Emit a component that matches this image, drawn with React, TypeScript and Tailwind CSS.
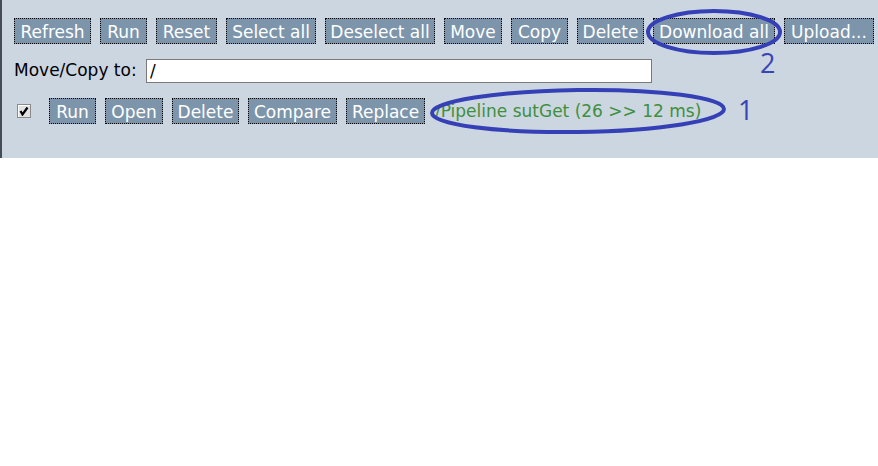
import React from "react";

const topButtons: [string, number][] = [
  ["Refresh", 77],
  ["Run", 47],
  ["Reset", 61],
  ["Select all", 90],
  ["Deselect all", 110],
  ["Move", 58],
  ["Copy", 57],
  ["Delete", 67],
  ["Download all", 122],
  ["Upload...", 90],
];

const itemButtons: [string, number][] = [
  ["Run", 47],
  ["Open", 58],
  ["Delete", 67],
  ["Compare", 89],
  ["Replace", 79],
];

const widthClass: Record<number, string> = {
  47: "w-[47px]",
  57: "w-[57px]",
  58: "w-[58px]",
  61: "w-[61px]",
  67: "w-[67px]",
  77: "w-[77px]",
  79: "w-[79px]",
  89: "w-[89px]",
  90: "w-[90px]",
  110: "w-[110px]",
  122: "w-[122px]",
};

function Btn({ label, w }: { label: string; w: number }) {
  return (
    <button
      className={`${widthClass[w]} h-[26px] pt-[3px] bg-[#7d95ab] border border-dotted border-black text-white text-[17px] leading-none whitespace-nowrap flex items-center justify-center`}
    >
      {label}
    </button>
  );
}

function CheckBox() {
  return (
    <span className="w-[14px] h-[14px] ml-[3px] mr-[18px] flex items-center justify-center bg-[#e2e2e2] border border-[#8a8a8a] shadow-[inset_1px_1px_0_#ffffff]">
      <svg width="10" height="10" viewBox="0 0 10 10">
        <path d="M1.5 5 L3.5 8.5 L8.5 1.5" fill="none" stroke="#000" strokeWidth="2.2" />
      </svg>
    </span>
  );
}

export default function App() {
  return (
    <div className="relative w-[878px] h-[466px] bg-white font-['DejaVu_Sans',Verdana,sans-serif]">
      <div className="h-[158px] bg-[#cbd6e0] border-l-2 border-[#454c57] pl-[12px] pt-[18px]">
        <div className="flex gap-[9px]">
          {topButtons.map(([b, w]) => (
            <Btn key={b} label={b} w={w} />
          ))}
        </div>
        <div className="flex items-center mt-[15px] h-[24px]">
          <span className="text-[17px] text-black w-[132px]">Move/Copy to:</span>
          <div className="w-[506px] h-[24px] bg-white border border-[#7a7a7a] px-[3px] text-[17px] leading-[22px] text-black">
            /
          </div>
        </div>
        <div className="flex items-center mt-[14px]">
          <CheckBox />
          <div className="flex gap-[9px]">
            {itemButtons.map(([b, w]) => (
              <Btn key={b} label={b} w={w} />
            ))}
          </div>
          <span className="ml-[10px] pt-[2px] text-[17px] text-[#3f8f3f] whitespace-nowrap">
            /Pipeline sutGet (26 &gt;&gt; 12 ms)
          </span>
        </div>
      </div>

      <svg
        className="absolute left-0 top-0 pointer-events-none"
        width="878"
        height="466"
        viewBox="0 0 878 466"
      >
        <ellipse cx="714" cy="32" rx="66" ry="21" fill="none" stroke="#3640b6" strokeWidth="4" />
        <ellipse
          cx="578"
          cy="111"
          rx="146"
          ry="21"
          fill="none"
          stroke="#3640b6"
          strokeWidth="4"
          transform="rotate(-0.8 578 111)"
        />
      </svg>
      <span className="absolute left-[738px] top-[96px] text-[27px] leading-none text-[#3a44b6] font-['Open_Sans',sans-serif]">
        1
      </span>
      <span className="absolute left-[760px] top-[49px] text-[27px] leading-none text-[#3a44b6] font-['Open_Sans',sans-serif]">
        2
      </span>
    </div>
  );
}
